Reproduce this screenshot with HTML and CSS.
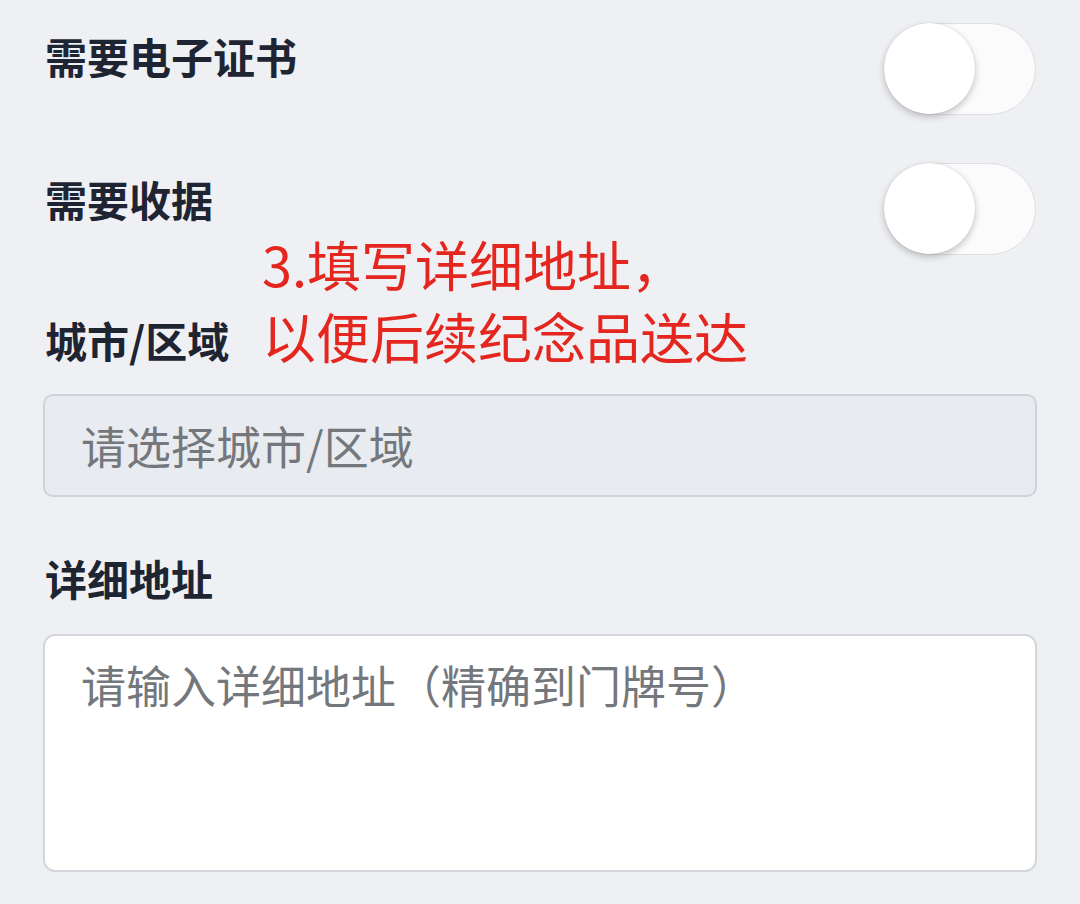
FILE: index.html
```html
<!DOCTYPE html>
<html lang="zh-CN">
<head>
<meta charset="utf-8">
<title>表单</title>
<link rel="stylesheet" href="styles.css">
</head>
<body>
<div class="form">
  <div class="switch-row">
    <span class="label">需要电子证书</span>
    <span class="switch"><span class="knob"></span></span>
  </div>
  <div class="switch-row">
    <span class="label">需要收据</span>
    <span class="switch"><span class="knob"></span></span>
  </div>
  <div class="note">3.填写详细地址，<br>以便后续纪念品送达</div>
  <div class="field-label first">城市/区域</div>
  <input class="select-input" type="text" placeholder="请选择城市/区域" readonly>
  <div class="field-label">详细地址</div>
  <textarea class="textarea" placeholder="请输入详细地址（精确到门牌号）"></textarea>
</div>
</body>
</html>
```
FILE: styles.css
```css
html, body {
  margin: 0;
  padding: 0;
  background: #eef0f3;
}
body {
  font-family: "Noto Sans CJK SC", "Noto Sans", sans-serif;
}
.form {
  position: relative;
  padding: 23px 43px 0;
  display: flex;
  flex-direction: column;
}
.switch-row {
  display: flex;
  justify-content: space-between;
  align-items: flex-start;
  height: 92px;
  margin-bottom: 48px;
}
.label, .field-label {
  font-size: 42px;
  line-height: 1;
  font-weight: 700;
  color: #1f2432;
  padding-left: 2px;
}
.switch-row .label {
  margin-top: 15px;
}
.switch-row:first-child .label {
  margin-top: 12px;
}
.switch {
  position: relative;
  width: 152px;
  height: 92px;
  box-sizing: border-box;
  border-radius: 46px;
  background: #fbfbfb;
  border: 1.5px solid #dedfe1;
  margin-right: 1px;
}
.knob {
  position: absolute;
  left: -1px;
  top: -1px;
  width: 91px;
  height: 91px;
  border-radius: 50%;
  background: #fff;
  box-shadow: 0 3px 7px rgba(0,0,0,0.22), 0 0 1px rgba(0,0,0,0.2);
}
.note {
  position: absolute;
  left: 262px;
  top: 228px;
  font-size: 54px;
  line-height: 72px;
  color: #e4261f;
  font-weight: 400;
  white-space: nowrap;
}
.field-label {
  margin-top: 60px;
}
.field-label.first {
  margin-top: 16px;
}
.select-input, .textarea {
  display: block;
  width: 100%;
  box-sizing: border-box;
  font-family: "Noto Sans CJK SC", "Noto Sans", sans-serif;
  font-size: 45px;
  color: #333;
  outline: none;
}
.select-input {
  margin: 33px 0 0;
  height: 103px;
  padding: 0 36px;
  border: 2px solid #cfd3d8;
  border-radius: 10px;
  background: #e8ebef;
}
.textarea {
  margin: 35px 0 0;
  height: 238px;
  padding: 24px 36px;
  border: 2px solid #d3d6da;
  border-radius: 12px;
  background: #ffffff;
  resize: none;
  line-height: 1.1;
}
.select-input::placeholder, .textarea::placeholder {
  color: #74777b;
  opacity: 1;
}
```
